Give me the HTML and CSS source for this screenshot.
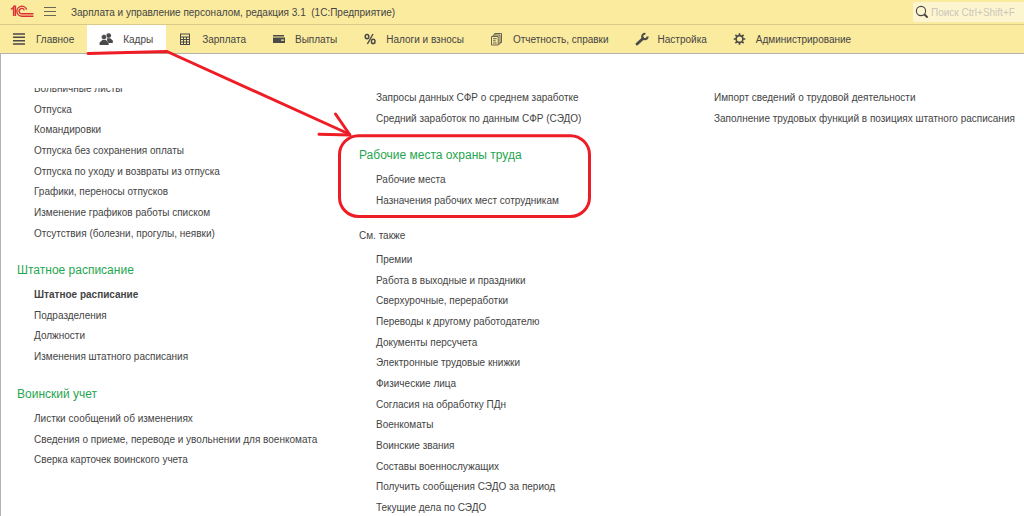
FILE: index.html
```html
<!DOCTYPE html>
<html lang="ru">
<head>
<meta charset="utf-8">
<title>Зарплата и управление персоналом, редакция 3.1</title>
<link rel="stylesheet" href="styles.css">
</head>
<body>
<header class="titlebar">
  <svg class="logo" viewBox="0 0 24 14" aria-label="1С" role="img">
    <g fill="none" stroke="#dc2f34" stroke-width="1.4">
      <path d="M1 4.5 3.6 2.2V11M3.2 1.2H5.4V11"/>
      <path d="M16.6 4.6A5 5 0 1 0 12.4 11.2H23.4"/>
      <path d="M14.3 5.2A2.7 2.7 0 1 0 12.4 8.8H23.4"/>
    </g>
  </svg>
  <button class="burger" type="button" aria-label="Меню">
    <svg viewBox="0 0 12 10"><path d="M0 .5H12M0 4.5H12M0 8.5H12" stroke="#6a6754" fill="none"/></svg>
  </button>
  <h1 class="app-title">Зарплата и управление персоналом, редакция 3.1 &nbsp;(1С:Предприятие)</h1>
  <label class="search">
    <svg viewBox="0 0 14 14"><circle cx="6" cy="6" r="4.6" fill="none" stroke="#444" stroke-width="1.1"/><path d="M9.3 9.3 12.6 12.6" stroke="#444" stroke-width="2"/></svg>
    <input class="search-input" type="text" placeholder="Поиск Ctrl+Shift+F" aria-label="Поиск">
  </label>
</header>

<nav class="sections">
  <a class="section" href="#main">
    <svg viewBox="0 0 14 14"><path d="M0 2H12M0 5.3H12M0 8.7H12M0 12H12" stroke="#4a4a48" stroke-width="1.6"/></svg>Главное</a>
  <a class="section section-active" href="#staff" aria-current="page">
    <svg viewBox="0 0 14 14" fill="#4a4a48"><circle cx="8.7" cy="3.6" r="2.4"/><path d="M7.2 6.3H10.2L12.8 8.6V11H8.7L7 8.5Z"/><circle cx="4" cy="5" r="2.6" stroke="#fff" stroke-width=".5"/><path d="M-.4 13V10.4L2.4 8H5.8L8.6 10.4V13Z"/></svg>Кадры</a>
  <a class="section" href="#salary">
    <svg viewBox="0 0 14 14"><path fill="#4a4a48" fill-rule="evenodd" d="M1 1.5H11V13H1ZM2 2.5V4.5H10V2.5ZM2 5.5V7H4V5.5ZM5 5.5V7H7V5.5ZM8 5.5V7H10V5.5ZM2 8V9.5H4V8ZM5 8V9.5H7V8ZM8 8V9.5H10V8ZM2 10.5V12H4V10.5ZM5 10.5V12H7V10.5ZM8 10.5V12H10V10.5Z"/></svg>Зарплата</a>
  <a class="section" href="#payments">
    <svg viewBox="0 0 14 14"><path fill="#4a4a48" fill-rule="evenodd" d="M1 3H12V4.6H1ZM1 5.6H13V11H1ZM9 7.6V8.8H12V7.6Z"/></svg>Выплаты</a>
  <a class="section" href="#taxes">
    <svg viewBox="0 0 14 14" fill="none" stroke="#4a4a48"><ellipse cx="4" cy="4.6" rx="1.8" ry="2.2" stroke-width="1.5"/><ellipse cx="10.2" cy="9.4" rx="1.8" ry="2.2" stroke-width="1.5"/><path d="M10 2 4.4 12" stroke-width="1.4"/></svg>Налоги и взносы</a>
  <a class="section" href="#reports">
    <svg viewBox="0 0 14 14" fill="none" stroke="#55534a" stroke-width=".9"><path d="M4.8 3V1.5H11.5V10.5H10M3.3 4.5V3H10V12H8.5M1.5 4.5H8.2V13H1.5ZM3 6.7H6.6M3 8.8H5.8M3 11H6.6"/></svg>Отчетность, справки</a>
  <a class="section" href="#setup">
    <svg viewBox="0 0 14 14" fill="none" stroke="#4a4a48"><path d="M2 12 8 6.4" stroke-width="2.8" stroke-linecap="round"/><path d="M10.4 1.8A2.7 2.7 0 1 0 12.6 4.4" stroke-width="2.1"/></svg>Настройка</a>
  <a class="section" href="#admin">
    <svg viewBox="0 0 14 14" fill="none" stroke="#4a4a48"><circle cx="6.5" cy="7" r="3.4" stroke-width="1.6"/><path d="M6.5 1.2V3.4M6.5 10.6V12.8M.7 7H2.9M10.1 7H12.3M2.4 2.9 4 4.5M9 9.5 10.6 11.1M10.6 2.9 9 4.5M4 9.5 2.4 11.1" stroke-width="1.7"/></svg>Администрирование</a>
</nav>

<main class="panel">
  <div class="columns">
    <div class="column column-scrolled">
      <ul class="links">
        <li><a href="#">Больничные листы</a></li>
        <li><a href="#">Отпуска</a></li>
        <li><a href="#">Командировки</a></li>
        <li><a href="#">Отпуска без сохранения оплаты</a></li>
        <li><a href="#">Отпуска по уходу и возвраты из отпуска</a></li>
        <li><a href="#">Графики, переносы отпусков</a></li>
        <li><a href="#">Изменение графиков работы списком</a></li>
        <li><a href="#">Отсутствия (болезни, прогулы, неявки)</a></li>
      </ul>
      <h2 class="group">Штатное расписание</h2>
      <ul class="links">
        <li><a class="primary" href="#">Штатное расписание</a></li>
        <li><a href="#">Подразделения</a></li>
        <li><a href="#">Должности</a></li>
        <li><a href="#">Изменения штатного расписания</a></li>
      </ul>
      <h2 class="group">Воинский учет</h2>
      <ul class="links">
        <li><a href="#">Листки сообщений об изменениях</a></li>
        <li><a href="#">Сведения о приеме, переводе и увольнении для военкомата</a></li>
        <li><a href="#">Сверка карточек воинского учета</a></li>
      </ul>
    </div>
    <div class="column">
      <ul class="links">
        <li><a href="#">Запросы данных СФР о среднем заработке</a></li>
        <li><a href="#">Средний заработок по данным СФР (СЭДО)</a></li>
      </ul>
      <h2 class="group">Рабочие места охраны труда</h2>
      <ul class="links">
        <li><a href="#">Рабочие места</a></li>
        <li><a href="#">Назначения рабочих мест сотрудникам</a></li>
      </ul>
      <h2 class="group group-plain">См. также</h2>
      <ul class="links">
        <li><a href="#">Премии</a></li>
        <li><a href="#">Работа в выходные и праздники</a></li>
        <li><a href="#">Сверхурочные, переработки</a></li>
        <li><a href="#">Переводы к другому работодателю</a></li>
        <li><a href="#">Документы персучета</a></li>
        <li><a href="#">Электронные трудовые книжки</a></li>
        <li><a href="#">Физические лица</a></li>
        <li><a href="#">Согласия на обработку ПДн</a></li>
        <li><a href="#">Военкоматы</a></li>
        <li><a href="#">Воинские звания</a></li>
        <li><a href="#">Составы военнослужащих</a></li>
        <li><a href="#">Получить сообщения СЭДО за период</a></li>
        <li><a href="#">Текущие дела по СЭДО</a></li>
      </ul>
    </div>
    <div class="column">
      <ul class="links">
        <li><a href="#">Импорт сведений о трудовой деятельности</a></li>
        <li><a href="#">Заполнение трудовых функций в позициях штатного расписания</a></li>
      </ul>
    </div>
  </div>
</main>

<svg class="markup" viewBox="0 0 600 230" aria-hidden="true">
  <g fill="none" stroke="#ee1c25" stroke-width="3" stroke-linecap="round" stroke-linejoin="round">
    <path d="M88 53.4 167 51.5 349 134"/>
    <path d="M335.5 114 350 135 319 134.3"/>
    <rect x="339.5" y="135.7" width="250" height="80.8" rx="19"/>
  </g>
</svg>
</body>
</html>
```
FILE: styles.css
```css
* { box-sizing: border-box; }

body {
  margin: 0;
  height: 100vh;
  display: flex;
  flex-direction: column;
  position: relative;
  overflow: hidden;
  background: #fff;
  color: #444;
  font: 10px/21px "Liberation Sans", Arial, sans-serif;
}

a { color: inherit; text-decoration: none; }

.titlebar {
  display: flex;
  align-items: center;
  height: 25px;
  padding-left: 10px;
  background: #fbeb9e;
  border-bottom: 1px solid #d9c989;
}

.logo { width: 24px; height: 14px; }

.burger {
  display: flex;
  margin: 0 15px 0 10px;
  padding: 0;
  border: 0;
  background: none;
}

.burger svg { width: 12px; height: 10px; }

.app-title {
  flex: 1;
  margin: 0;
  font-size: 10px;
  font-weight: normal;
  white-space: nowrap;
}

.search {
  display: flex;
  align-items: center;
  gap: 2px;
  width: 111px;
  height: 20px;
  padding-left: 2px;
  background: #fdf5cf;
  border-radius: 2px 0 0 2px;
}

.search svg { flex: none; width: 14px; height: 14px; }

.search-input {
  flex: 1;
  min-width: 0;
  padding: 0;
  border: 0;
  outline: 0;
  background: none;
  color: #444;
  font: inherit;
}

.search-input::placeholder { color: #cbc6bd; opacity: 1; }

.sections {
  display: flex;
  height: 29px;
  background: #fbeb9e;
  border-bottom: 1px solid #b5b3a8;
}

.section {
  display: flex;
  align-items: center;
  gap: 9px;
  padding: 0 13px;
  white-space: nowrap;
}

.section svg { width: 14px; height: 14px; overflow: visible; }

.section-active { background: #fff; }

.panel {
  flex: 1;
  min-height: 0;
  display: flex;
  padding-top: 34px;
  border-left: 1px solid #b4b4b4;
}

/* The scrolled command list is cut off at its top edge. */
.columns {
  flex: 1;
  display: grid;
  grid-template-columns: 342fr 338fr 327fr;
  padding-left: 16px;
  overflow: hidden;
}

.column { min-width: 0; margin-top: -1px; }

.column-scrolled { margin-top: -10px; }

.links {
  margin: 0;
  padding: 0 0 0 17px;
  list-style: none;
  white-space: nowrap;
}

.links li { height: 21px; }

.links li:nth-child(3n + 2) { height: 20px; }

.primary { font-weight: bold; }

.group {
  margin: 15px 0 2px;
  color: #1fa650;
  font-size: 12px;
  font-weight: normal;
  line-height: 24px;
}

.group-plain { color: #444; font-size: 10px; line-height: 22px; }

/* Hand-drawn marks lie over the menu. */
.markup {
  position: absolute;
  top: 0;
  left: 0;
  width: 600px;
  height: 230px;
  pointer-events: none;
}
```
